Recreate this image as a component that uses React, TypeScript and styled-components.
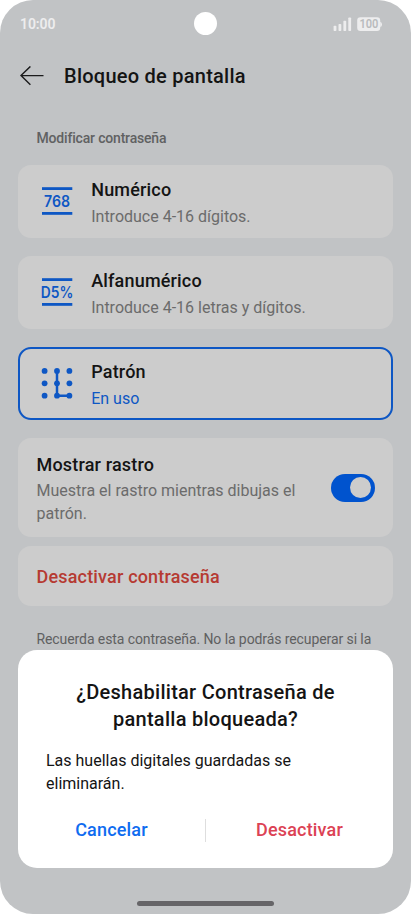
import React from "react";
import styled, { createGlobalStyle } from "styled-components";

const GlobalStyle = createGlobalStyle`
  * { box-sizing: border-box; }
  body { margin: 0; background: #fff; font-family: Roboto, "Noto Sans", sans-serif; }
`;

const Screen = styled.div`
  position: relative;
  width: 411px;
  height: 914px;
  overflow: hidden;
  background: #c1c3c5;
  border-radius: 33px;
  color: #141414;
`;

const StatusBar = styled.div`
  display: grid;
  grid-template-columns: 1fr 24px 1fr;
  align-items: center;
  height: 47px;
  padding: 0 29px 0 20px;
`;

const Clock = styled.span`
  font-size: 14px;
  font-weight: 600;
  line-height: 20px;
  letter-spacing: -0.1px;
  color: #ededee;
`;

const Camera = styled.div`
  width: 23px;
  height: 23px;
  margin-left: 5px;
  border-radius: 50%;
  background: #fff;
`;

const Indicators = styled.div`
  display: flex;
  align-items: center;
  justify-content: flex-end;
`;

const Header = styled.header`
  display: flex;
  align-items: center;
  height: 58px;
  padding-left: 20px;
  gap: 20px;
`;

const PageTitle = styled.h1`
  margin: 0;
  font-size: 20px;
  font-weight: 500;
  line-height: 28px;
  letter-spacing: 0.25px;
`;

const SectionLabel = styled.div`
  margin: 23px 0 17px 36.5px;
  font-size: 14px;
  font-weight: 500;
  line-height: 20px;
  letter-spacing: -0.18px;
  color: #606162;
`;

const List = styled.main`
  display: flex;
  flex-direction: column;
  padding: 0 18px;
`;

const Option = styled.section<{ $active?: boolean }>`
  display: flex;
  align-items: center;
  height: 73px;
  margin-bottom: 18px;
  padding-left: ${(p) => (p.$active ? 20 : 22)}px;
  border: ${(p) => (p.$active ? "2px solid #0e57c4" : "0")};
  border-radius: 13px;
  background: #ccc;
`;

const OptionText = styled.div`
  margin: 0 0 0 18.2px;
  padding-top: 2px;
`;

const CardTitle = styled.div<{ $danger?: boolean }>`
  font-size: 18px;
  font-weight: 500;
  line-height: 26px;
  letter-spacing: 0.18px;
  color: ${(p) => (p.$danger ? "#b63a32" : "#141414")};
`;

const CardNote = styled.div<{ $accent?: boolean }>`
  font-size: 16px;
  line-height: 23px;
  margin-top: 2px;
  color: ${(p) => (p.$accent ? "#0e57c4" : "#6b6b6b")};
`;

const TrailCard = styled.section`
  display: flex;
  align-items: center;
  justify-content: space-between;
  height: 99px;
  margin-bottom: 9px;
  padding: 0 18px 0 18.5px;
  border-radius: 13px;
  background: #ccc;
`;

const TrailText = styled.div`
  width: 276px;
  padding-top: 2px;
`;

const TrailNote = styled(CardNote)`
  margin-top: 1px;
`;

const Toggle = styled.div`
  display: flex;
  align-items: center;
  justify-content: flex-end;
  width: 44px;
  height: 28px;
  padding-right: 4px;
  border-radius: 14px;
  background: #0053ce;
`;

const Knob = styled.div`
  width: 21px;
  height: 21px;
  border-radius: 50%;
  background: #ccc;
`;

const ActionCard = styled.section`
  display: flex;
  align-items: center;
  height: 60px;
  padding: 1px 0 0 18.5px;
  border-radius: 13px;
  background: #ccc;
`;

const FootNote = styled.p`
  margin: 23px 0 0 18.5px;
  font-size: 14px;
  line-height: 20px;
  letter-spacing: -0.09px;
  color: #5f6061;
  white-space: nowrap;
`;

const Dialog = styled.div`
  position: absolute;
  left: 18px;
  right: 18px;
  bottom: 46px;
  height: 218px;
  padding: 29px 28px 0;
  border-radius: 19px;
  background: #fff;
`;

const DialogTitle = styled.h2`
  margin: 0;
  font-size: 20px;
  font-weight: 500;
  line-height: 26.6px;
  letter-spacing: 0.27px;
  text-align: center;
`;

const DialogBody = styled.p`
  margin: 16.6px 0 0;
  font-size: 16px;
  line-height: 23.2px;
`;

const Actions = styled.div`
  display: grid;
  grid-template-columns: 1fr 1px 1fr;
  align-items: center;
  height: 24px;
  margin: 22.4px -28px 0;
`;

const ActionButton = styled.button<{ $danger?: boolean }>`
  padding: 0;
  border: 0;
  background: none;
  font-family: inherit;
  font-size: 18px;
  font-weight: 500;
  line-height: 24px;
  letter-spacing: 0.18px;
  color: ${(p) => (p.$danger ? "#dc4254" : "#0f6cf0")};
`;

const Divider = styled.div`
  height: 23px;
  margin-top: 1px;
  background: #dedede;
`;

const HomeBar = styled.div`
  position: absolute;
  left: 137px;
  bottom: 8px;
  width: 137px;
  height: 5px;
  border-radius: 3px;
  background: #666568;
`;

const CodeGlyph = styled.svg`
  flex: none;
  overflow: visible;
`;

function CodeIcon({ text, width }: { text: string; width: number }) {
  return (
    <CodeGlyph width="33" height="31" viewBox="0 0 33 31" fill="#0e57c4">
      <rect x="2" y="1.2" width="30.3" height="2.8" />
      <rect x="2" y="26" width="30.3" height="2.8" />
      <text
        x="17"
        y="20.8"
        textAnchor="middle"
        textLength={width}
        lengthAdjust="spacingAndGlyphs"
        fontFamily="Inter, sans-serif"
        fontWeight="600"
        fontSize="15.6"
      >
        {text}
      </text>
    </CodeGlyph>
  );
}

function PatternIcon() {
  const points = [4.6, 17, 29.4];
  return (
    <svg width="33" height="31" viewBox="0 0 33 31" fill="#0e57c4">
      {points.map((x) => points.map((y) => <circle key={`${x}-${y}`} cx={x} cy={y - 1.7} r="2.9" />))}
      <path d="M17 2.9V27.7H29.4" fill="none" stroke="#0e57c4" strokeWidth="2.5" />
    </svg>
  );
}

export default function App() {
  return (
    <>
      <GlobalStyle />
      <Screen>
        <StatusBar>
          <Clock>10:00</Clock>
          <Camera />
          <Indicators>
            <svg width="50" height="16" viewBox="0 0 50 16" fill="#ededee">
              <rect x="1.6" y="9.8" width="2.8" height="5.2" rx="0.8" />
              <rect x="6.5" y="8" width="2.8" height="7" rx="0.8" />
              <rect x="11.4" y="4.7" width="2.8" height="10.3" rx="0.8" />
              <rect x="16.3" y="1.4" width="2.8" height="13.6" rx="0.8" />
              <rect x="25.2" y="1.3" width="23" height="13.7" rx="3.2" />
              <path d="M48.2 5.8Q50 6.3 50 8.4Q50 10.5 48.2 11Z" />
              <text
                x="36.9"
                y="12.4"
                textAnchor="middle"
                textLength="19"
                lengthAdjust="spacingAndGlyphs"
                fontSize="12"
                fontWeight="600"
                fill="#b9bbbd"
                fontFamily="Roboto, sans-serif"
              >
                100
              </text>
            </svg>
          </Indicators>
        </StatusBar>
        <Header>
          <svg width="24" height="20" viewBox="0 0 24 20" fill="none" stroke="#1b1b1c" strokeWidth="1.4">
            <path d="M10.4 0.4L1 9.6L10.4 18.8M1 9.6H23.5" />
          </svg>
          <PageTitle>Bloqueo de pantalla</PageTitle>
        </Header>
        <SectionLabel>Modificar contraseña</SectionLabel>
        <List>
          <Option>
            <CodeIcon text="768" width={26} />
            <OptionText>
              <CardTitle>Numérico</CardTitle>
              <CardNote>Introduce 4-16 dígitos.</CardNote>
            </OptionText>
          </Option>
          <Option>
            <CodeIcon text="D5%" width={32.5} />
            <OptionText>
              <CardTitle>Alfanumérico</CardTitle>
              <CardNote>Introduce 4-16 letras y dígitos.</CardNote>
            </OptionText>
          </Option>
          <Option $active>
            <PatternIcon />
            <OptionText>
              <CardTitle>Patrón</CardTitle>
              <CardNote $accent>En uso</CardNote>
            </OptionText>
          </Option>
          <TrailCard>
            <TrailText>
              <CardTitle>Mostrar rastro</CardTitle>
              <TrailNote>Muestra el rastro mientras dibujas el patrón.</TrailNote>
            </TrailText>
            <Toggle>
              <Knob />
            </Toggle>
          </TrailCard>
          <ActionCard>
            <CardTitle $danger>Desactivar contraseña</CardTitle>
          </ActionCard>
          <FootNote>Recuerda esta contraseña. No la podrás recuperar si la</FootNote>
        </List>
        <Dialog>
          <DialogTitle>
            ¿Deshabilitar Contraseña de
            <br />
            pantalla bloqueada?
          </DialogTitle>
          <DialogBody>
            Las huellas digitales guardadas se
            <br />
            eliminarán.
          </DialogBody>
          <Actions>
            <ActionButton>Cancelar</ActionButton>
            <Divider />
            <ActionButton $danger>Desactivar</ActionButton>
          </Actions>
        </Dialog>
        <HomeBar />
      </Screen>
    </>
  );
}
